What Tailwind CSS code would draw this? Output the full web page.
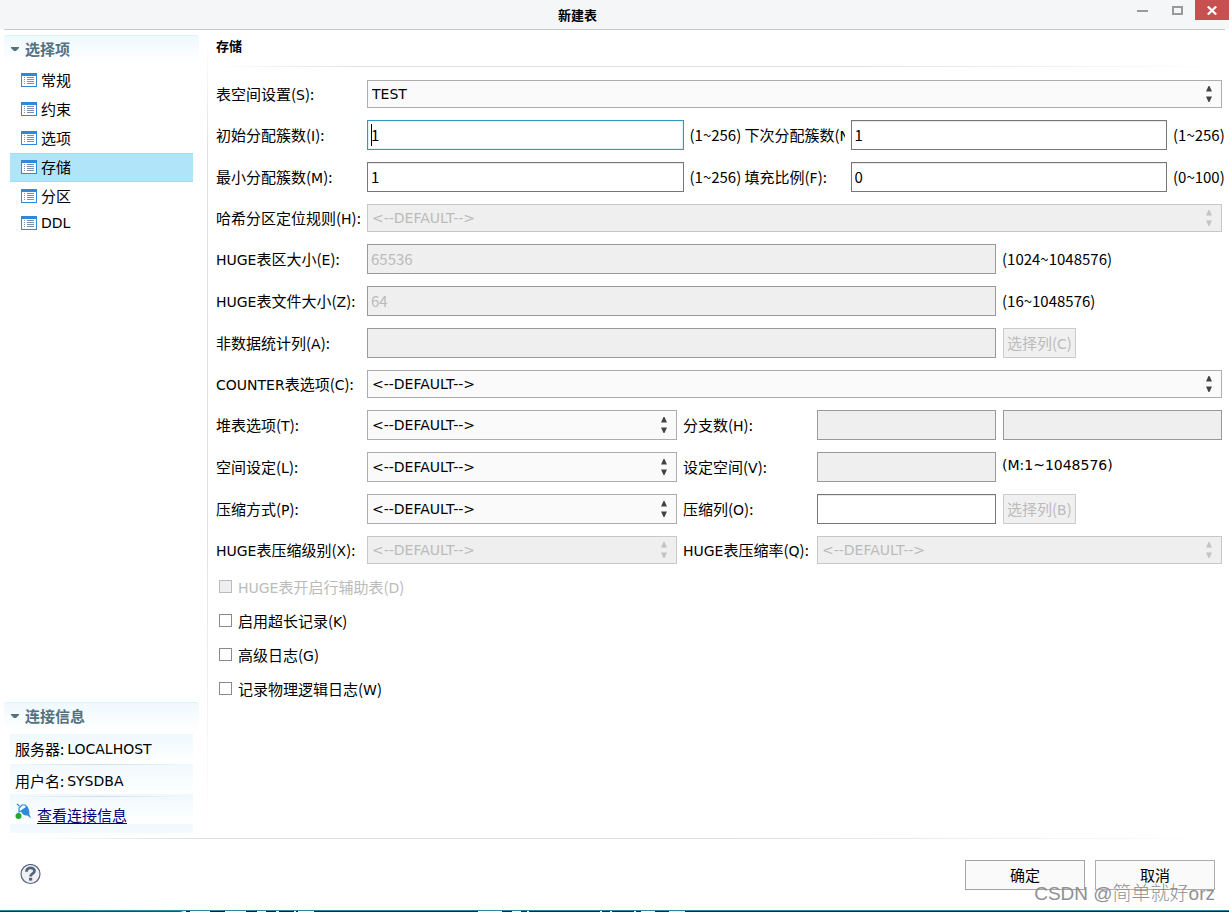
<!DOCTYPE html>
<html lang="zh-CN">
<head>
<meta charset="utf-8">
<title>新建表</title>
<script src="https://cdn.jsdelivr.net/npm/@tailwindcss/browser@4"></script>
<style>
body, input, button { font-family: "Noto Sans CJK SC", sans-serif; }
b, select { font-family: "DejaVu Sans", "Noto Sans CJK SC", sans-serif; font-weight: 400; }
b { font-size: 14px; line-height: 1; }
</style>
</head>
<body class="relative flex min-h-screen flex-col overflow-x-hidden bg-white text-[15px] leading-[22px] text-black">

<svg class="hidden">
  <symbol id="list" viewBox="0 0 16 14">
    <path fill="#2f88da" d="M0 0h16v14H0z"/><path fill="#fff" d="M1 3h14v10H1z"/>
    <path stroke="#7d8fb0" d="M3 4.500h1M3 6.500h1M3 8.500h1M3 10.500h1M6 4.500h7M6 6.500h7M6 8.500h7M6 10.500h7"/>
  </symbol>
  <symbol id="updown" viewBox="0 0 6 16">
    <path fill="currentColor" d="M2.500 0h1L6 5.500H0zM0 10.500h6L3.500 16h-1z"/>
  </symbol>
  <symbol id="twist" viewBox="0 0 8 4"><path fill="#54717e" d="M0 0h8v1L5 4H3L0 1z"/></symbol>
</svg>

<header class="relative flex h-[29px] justify-center bg-[#f5f6f8] pt-1">
  <h1 class="pr-[74px] text-[13px] leading-[22px] font-bold">新建表</h1>
  <div class="absolute top-0 right-0 flex h-5">
    <button aria-label="最小化" class="flex w-[35px] items-center justify-center"><svg class="h-[10px] w-[11px]" viewBox="0 0 11 10"><path fill="#999" d="M0 5h11v2H0z"/></svg></button>
    <button aria-label="最大化" class="flex w-[35px] items-center justify-center"><svg class="h-[9px] w-[11px]" viewBox="0 0 11 9"><path fill="none" stroke="#999" stroke-width="2" d="M1 1h9v7H1z"/></svg></button>
    <button aria-label="关闭" class="flex w-[34px] items-center justify-center bg-[#c75050]"><svg class="h-[9px] w-[10px]" viewBox="0 0 10 9"><path stroke="#fff" stroke-width="2.200" d="M.8.5l8.400 8M9.200.5l-8.400 8"/></svg></button>
  </div>
</header>
<div class="mx-1 h-px bg-[#c8c8c8]"></div>

<div class="flex flex-1">
  <aside class="flex w-[207px] shrink-0 flex-col pt-[5px] pr-2 pl-1">
    <h2 class="flex h-[31px] items-center gap-[6px] rounded-t-[3px] border-t border-[#dbf4fc] bg-linear-to-b from-[#eff9fe] to-white to-90% pb-1 pl-[7px] font-bold text-[#54717e]"><svg class="h-1 w-2"><use href="#twist"/></svg>选择项</h2>
    <nav class="mx-[6px] flex flex-col">
      <a href="#" class="flex h-[29px] items-center gap-1 pb-[2px] pl-[11px]"><svg class="h-[14px] w-4"><use href="#list"/></svg>常规</a>
      <a href="#" class="flex h-[29px] items-center gap-1 pb-[2px] pl-[11px]"><svg class="h-[14px] w-4"><use href="#list"/></svg>约束</a>
      <a href="#" class="flex h-[29px] items-center gap-1 pb-[2px] pl-[11px]"><svg class="h-[14px] w-4"><use href="#list"/></svg>选项</a>
      <a href="#" aria-current="page" class="flex h-[29px] items-center gap-1 border-y border-[#a0def5] bg-[#b0e5f9] pb-[2px] pl-[11px]"><svg class="h-[14px] w-4"><use href="#list"/></svg>存储</a>
      <a href="#" class="flex h-[29px] items-center gap-1 pb-[2px] pl-[11px]"><svg class="h-[14px] w-4"><use href="#list"/></svg>分区</a>
      <a href="#" class="flex h-[26px] items-center gap-1 pb-[2px] pl-[11px]"><svg class="h-[14px] w-4"><use href="#list"/></svg><b>DDL</b></a>
    </nav>
    <h2 class="mt-auto flex h-[31px] items-center gap-[6px] rounded-t-[3px] border-t border-[#dbf4fc] bg-linear-to-b from-[#eff9fe] to-white to-90% pb-1 pl-[7px] font-bold text-[#54717e]"><svg class="h-1 w-2"><use href="#twist"/></svg>连接信息</h2>
    <div class="mx-[6px] mt-px mb-[5px] h-[99px] bg-linear-to-b from-[#eff9fd] to-white bg-[length:100%_30px]">
      <p class="flex h-[30px] items-center gap-[3px] pl-[5px]">服务器:<b class="leading-[18px]">LOCALHOST</b></p>
      <div class="h-px bg-linear-to-r from-transparent via-[#d4dde1] to-transparent"></div>
      <p class="mt-px flex h-[30px] items-center gap-[3px] pl-[5px]">用户名:<b class="leading-[18px]">SYSDBA</b></p>
      <div class="h-px bg-linear-to-r from-transparent via-[#d4dde1] to-transparent"></div>
      <p class="flex h-9 items-center gap-[6px] pl-[5px]">
        <svg class="mb-2 h-4 w-4" viewBox="0 0 16 16"><path fill="#fff" stroke="#2f88da" stroke-width="1.200" d="M2 1l2.500 2M4 9V5l3-3h3l2 2-6 4z"/><path fill="#2f88da" d="M6 8l6-4.500c2 2 2.600 4.500 2.300 7.500L16 15.500l-3.500-3C9.500 13 6.500 11 6 8z"/><circle cx="3.500" cy="13" r="3" fill="#22a832"/></svg>
        <a href="#" class="text-[#00007f] underline underline-offset-2">查看连接信息</a></p>
    </div>
  </aside>

  <div class="my-2 w-px bg-[linear-gradient(#fff,#dfdfdf_15%,#dfdfdf_60%,#fff)]"></div>

  <main class="min-w-0 flex-1 pt-[5px] pr-[7px] pl-2">
    <h2 class="text-[13px] leading-[22px] font-bold">存储</h2>
    <div class="mt-[9px] h-px bg-[linear-gradient(to_right,#fff,#dfdfdf_15%,#dfdfdf_60%,#fff)]"></div>
    <form class="mt-[13px] grid grid-cols-[151px_minmax(0,310fr)_140px_minmax(0,179fr)_minmax(0,226fr)] items-center gap-y-3 whitespace-nowrap">
      <label for="ts">表空间设置(<b>S</b>):</label>
      <div class="relative col-span-4"><select id="ts" class="block h-7 w-full appearance-none border border-[#adadad] bg-[#fafafa] px-1 text-[14px]"><option>TEST</option></select><svg class="pointer-events-none absolute top-[6px] right-[10px] h-4 w-[6px] text-[#444]"><use href="#updown"/></svg></div>

      <label for="init">初始分配簇数(<b>I</b>):</label>
      <div class="col-span-4 grid grid-cols-[minmax(0,1fr)_61px_106px_minmax(0,1fr)_55px] items-center">
        <div class="relative"><input id="init" value="1" class="block h-[30px] w-full border border-[#3399bb] bg-white px-[3px] pb-[2px] shadow-[inset_0_0_0_1px_#e0f2f9]"><span class="absolute top-1 left-1 h-[22px] w-px bg-black"></span></div>
        <span class="pl-[6px]">(1~256)</span>
        <label for="next" class="mr-[6px] overflow-hidden">下次分配簇数(<b>N</b>):</label>
        <input id="next" value="1" class="h-[30px] border border-[#777] bg-white px-[3px] pb-[2px] shadow-[inset_0_1px_#e8e8e8]">
        <span class="pl-[6px]">(1~256)</span>
      </div>

      <label for="min">最小分配簇数(<b>M</b>):</label>
      <div class="col-span-4 grid grid-cols-[minmax(0,1fr)_61px_106px_minmax(0,1fr)_55px] items-center">
        <input id="min" value="1" class="h-[30px] border border-[#777] bg-white px-[3px] pb-[2px] shadow-[inset_0_1px_#e8e8e8]">
        <span class="pl-[6px]">(1~256)</span>
        <label for="fill">填充比例(<b>F</b>):</label>
        <input id="fill" value="0" class="h-[30px] border border-[#777] bg-white px-[3px] pb-[2px] shadow-[inset_0_1px_#e8e8e8]">
        <span class="pl-[6px]">(0~100)</span>
      </div>

      <label for="hash">哈希分区定位规则(<b>H</b>):</label>
      <div class="relative col-span-4"><select id="hash" disabled class="block h-7 w-full appearance-none border border-[#c8c8c8] bg-[#efefef] px-1 text-[14px] text-[#bbb] opacity-100"><option>&lt;--DEFAULT--&gt;</option></select><svg class="pointer-events-none absolute top-[6px] right-[10px] h-4 w-[6px] text-[#c4c4c4]"><use href="#updown"/></svg></div>

      <label for="ext"><b>HUGE</b>表区大小(<b>E</b>):</label>
      <input id="ext" value="65536" disabled class="col-span-3 h-[30px] border border-[#999] bg-[#efefef] px-[3px] pb-[2px] text-[#bbb]">
      <span class="pl-[6px]">(1024~1048576)</span>

      <label for="file"><b>HUGE</b>表文件大小(<b>Z</b>):</label>
      <input id="file" value="64" disabled class="col-span-3 h-[30px] border border-[#999] bg-[#efefef] px-[3px] pb-[2px] text-[#bbb]">
      <span class="pl-[6px]">(16~1048576)</span>

      <label for="stat">非数据统计列(<b>A</b>):</label>
      <input id="stat" disabled class="col-span-3 h-[30px] border border-[#999] bg-[#efefef] px-[3px]">
      <div class="pl-[7px]"><button type="button" disabled class="block h-[30px] border border-[#ccc] bg-[#f0f0f0] px-[3px] text-[#bbb]">选择列(<b>C</b>)</button></div>

      <label for="counter"><b>COUNTER</b>表选项(<b>C</b>):</label>
      <div class="relative col-span-4"><select id="counter" class="block h-7 w-full appearance-none border border-[#adadad] bg-[#fafafa] px-1 text-[14px]"><option>&lt;--DEFAULT--&gt;</option></select><svg class="pointer-events-none absolute top-[6px] right-[10px] h-4 w-[6px] text-[#444]"><use href="#updown"/></svg></div>

      <label for="heap">堆表选项(<b>T</b>):</label>
      <div class="relative"><select id="heap" class="block h-[30px] w-full appearance-none border border-[#adadad] bg-[#fafafa] px-1 text-[14px]"><option>&lt;--DEFAULT--&gt;</option></select><svg class="pointer-events-none absolute top-[7px] right-[10px] h-4 w-[6px] text-[#444]"><use href="#updown"/></svg></div>
      <label for="branch" class="pl-[6px]">分支数(<b>H</b>):</label>
      <input id="branch" disabled class="h-[30px] min-w-0 border border-[#999] bg-[#efefef] px-[3px]">
      <input aria-label="分支数" disabled class="ml-[7px] h-[30px] min-w-0 border border-[#999] bg-[#efefef] px-[3px]">

      <label for="space">空间设定(<b>L</b>):</label>
      <div class="relative"><select id="space" class="block h-[30px] w-full appearance-none border border-[#adadad] bg-[#fafafa] px-1 text-[14px]"><option>&lt;--DEFAULT--&gt;</option></select><svg class="pointer-events-none absolute top-[7px] right-[10px] h-4 w-[6px] text-[#444]"><use href="#updown"/></svg></div>
      <label for="set" class="pl-[6px]">设定空间(<b>V</b>):</label>
      <input id="set" disabled class="h-[30px] min-w-0 border border-[#999] bg-[#efefef] px-[3px]">
      <b class="pb-1 pl-[6px]">(M:1~1048576)</b>

      <label for="comp">压缩方式(<b>P</b>):</label>
      <div class="relative"><select id="comp" class="block h-[30px] w-full appearance-none border border-[#adadad] bg-[#fafafa] px-1 text-[14px]"><option>&lt;--DEFAULT--&gt;</option></select><svg class="pointer-events-none absolute top-[7px] right-[10px] h-4 w-[6px] text-[#444]"><use href="#updown"/></svg></div>
      <label for="col" class="pl-[6px]">压缩列(<b>O</b>):</label>
      <input id="col" class="h-[30px] min-w-0 border border-[#777] bg-white px-[3px] shadow-[inset_0_1px_#e8e8e8]">
      <div class="pl-[7px]"><button type="button" disabled class="block h-[30px] border border-[#ccc] bg-[#f0f0f0] px-[3px] text-[#bbb]">选择列(<b>B</b>)</button></div>

      <label for="level"><b>HUGE</b>表压缩级别(<b>X</b>):</label>
      <div class="relative"><select id="level" disabled class="block h-7 w-full appearance-none border border-[#c8c8c8] bg-[#efefef] px-1 text-[14px] text-[#bbb] opacity-100"><option>&lt;--DEFAULT--&gt;</option></select><svg class="pointer-events-none absolute top-[6px] right-[10px] h-4 w-[6px] text-[#c4c4c4]"><use href="#updown"/></svg></div>
      <label for="rate" class="pl-[6px]"><b>HUGE</b>表压缩率(<b>Q</b>):</label>
      <div class="relative col-span-2"><select id="rate" disabled class="block h-7 w-full appearance-none border border-[#c8c8c8] bg-[#efefef] px-1 text-[14px] text-[#bbb] opacity-100"><option>&lt;--DEFAULT--&gt;</option></select><svg class="pointer-events-none absolute top-[6px] right-[10px] h-4 w-[6px] text-[#c4c4c4]"><use href="#updown"/></svg></div>

      <label class="col-span-5 flex h-[22px] items-center gap-[6px] pl-[3px] text-[#bbb]"><input type="checkbox" disabled class="mb-[2px] size-[13px] appearance-none border border-[#bbb] bg-[#efefef]"><span><b>HUGE</b>表开启行辅助表(<b>D</b>)</span></label>
      <label class="col-span-5 flex h-[22px] items-center gap-[6px] pl-[3px]"><input type="checkbox" class="mb-[2px] size-[13px] appearance-none border border-[#8a8a8a] bg-white"><span>启用超长记录(<b>K</b>)</span></label>
      <label class="col-span-5 flex h-[22px] items-center gap-[6px] pl-[3px]"><input type="checkbox" class="mb-[2px] size-[13px] appearance-none border border-[#8a8a8a] bg-white"><span>高级日志(<b>G</b>)</span></label>
      <label class="col-span-5 flex h-[22px] items-center gap-[6px] pl-[3px]"><input type="checkbox" class="mb-[2px] size-[13px] appearance-none border border-[#8a8a8a] bg-white"><span>记录物理逻辑日志(<b>W</b>)</span></label>
    </form>
  </main>
</div>

<div class="mx-[10px] h-px bg-[linear-gradient(to_right,#fff,#dfdfdf_15%,#dfdfdf_60%,#fff)]"></div>
<footer class="flex h-[71px] items-center gap-[10px] pr-[14px] pl-5">
  <button aria-label="帮助" class="mr-auto"><svg class="block h-[21px] w-[21px]" viewBox="0 0 21 21"><circle cx="10.500" cy="10" r="9.500" fill="#f0f0f2" stroke="#56657f" stroke-width="1.200"/><path d="M6.500 7.700c0-5 8-4.800 8-.8 0 2.800-4 2.600-4 5.600" fill="none" stroke="#56657f" stroke-width="2.800"/><path fill="#56657f" d="M9 13.800h3.200v2.800H9z"/></svg></button>
  <button class="h-[30px] w-[120px] border border-[#a4a4a4] bg-[#fafafa]">确定</button>
  <button class="h-[30px] w-[120px] border border-[#adadad] bg-[#fafafa]">取消</button>
</footer>
<!-- Edge of the desktop below the dialog -->
<div class="h-px bg-[#2b879d]"></div>
<div class="h-px bg-[linear-gradient(to_right,#043a5c,#0b58a8_180px,#fff_184px,#fff_186px,#06202c_186px,#06202c_190px,#fff_190px,#fff_210px,#06202c_210px,#06202c_225px,#fff_225px,#fff_246px,#06202c_246px,#06202c_257px,#fff_257px,#fff_266px,#06202c_266px,#06202c_276px,#fff_276px,#fff_279px,#06202c_279px,#06202c_294px,#fff_294px,#fff_296px,#06202c_296px,#06202c_298px,#fff_298px,#fff_314px,#06303c_314px,#06303c_478px,#fff_478px,#fff_502px,#06303c_502px,#06303c_512px,#fff_512px,#fff_521px,#06303c_521px,#06303c_527px,#fff_527px,#fff_529px,#06303c_529px,#06303c_600px,#fff_600px,#fff_602px,#06303c_602px,#06303c_610px,#fff_610px,#fff_612px,#06303c_612px,#06303c_634px,#fff_634px,#fff_636px,#06303c_636px,#06303c_641px,#fff_641px,#fff_655px,#06303c_655px,#06303c_669px,#e0ecf0_669px,#e0ecf0_685px,#06303c_685px)]"></div>
<p class="absolute right-[14px] bottom-[7px] font-['Liberation_Sans','Noto_Sans_CJK_SC',sans-serif] text-[19px] font-light text-[#909090]">CSDN @简单就好orz</p>
</body>
</html>
